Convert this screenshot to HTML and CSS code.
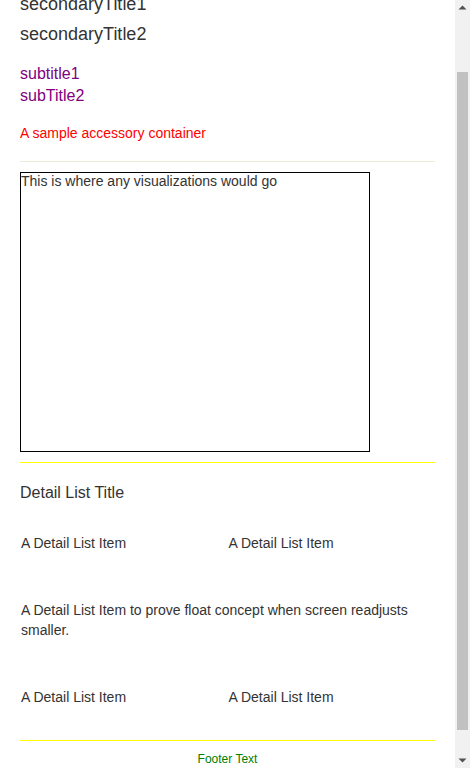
FILE: index.html
```html
<!DOCTYPE html>
<html lang="en">
<head>
<meta charset="utf-8">
<title>Sample Layout</title>
<link rel="stylesheet" href="styles.css">
</head>
<body>
<div class="window">
  <div class="viewport" id="viewport">
    <div class="page">
      <header class="titles">
        <h2 class="secondary-title">secondaryTitle1</h2>
        <h2 class="secondary-title">secondaryTitle2</h2>
      </header>
      <div class="subtitles">
        <h3 class="subtitle">subtitle1</h3>
        <h3 class="subtitle">subTitle2</h3>
      </div>
      <div class="accessory">A sample accessory container</div>
      <div class="rule rule-pale"></div>
      <div class="visual">This is where any visualizations would go</div>
      <div class="rule rule-yellow rule-after-visual"></div>
      <h4 class="detail-title">Detail List Title</h4>
      <ul class="detail-list">
        <li class="detail-item">A Detail List Item</li>
        <li class="detail-item">A Detail List Item</li>
        <li class="detail-item detail-item-wide">A Detail List Item to prove float concept when screen readjusts smaller.</li>
        <li class="detail-item">A Detail List Item</li>
        <li class="detail-item">A Detail List Item</li>
      </ul>
      <div class="rule rule-yellow rule-before-footer"></div>
      <footer class="footer">Footer Text</footer>
    </div>
  </div>
  <div class="scrollbar" aria-hidden="true">
    <div class="sb-button">
      <svg width="15" height="15" viewBox="0 0 15 15"><polygon points="3.5,9.5 7.5,5.5 11.5,9.5" fill="#505050"/></svg>
    </div>
    <div class="sb-track">
      <div class="sb-thumb"></div>
    </div>
    <div class="sb-button">
      <svg width="15" height="15" viewBox="0 0 15 15"><polygon points="3.5,5.5 7.5,9.5 11.5,5.5" fill="#505050"/></svg>
    </div>
  </div>
</div>
<script src="app.js"></script>
</body>
</html>
```

FILE: styles.css
```css
html, body {
  margin: 0;
  padding: 0;
  height: 100%;
  overflow: hidden;
  background: #fff;
}

body {
  font-family: "Liberation Sans", Arial, sans-serif;
  color: #333;
}

.window {
  display: flex;
  height: 100vh;
}

.viewport {
  flex: 1 1 auto;
  min-width: 0;
  height: 100vh;
  overflow: hidden;
}

.page {
  padding: 56px 20px 32px;
  display: flex;
  flex-direction: column;
}

.titles {
  display: flex;
  flex-direction: column;
}

.secondary-title {
  margin: 0;
  font-size: 18px;
  line-height: 30px;
  font-weight: normal;
  color: #333;
}

.subtitles {
  margin-top: 14px;
  display: flex;
  flex-direction: column;
}

.subtitle {
  margin: 0;
  font-size: 16px;
  line-height: 22px;
  font-weight: normal;
  color: #800080;
}

.accessory {
  margin-top: 16px;
  font-size: 14px;
  line-height: 20px;
  color: #ff0000;
}

.rule {
  height: 1px;
}

.rule-pale {
  margin-top: 18px;
  background: #ececd8;
}

.rule-yellow {
  background: #ffff00;
}

.visual {
  margin-top: 10px;
  width: 350px;
  height: 280px;
  box-sizing: border-box;
  border: 1px solid #000;
  font-size: 14px;
  line-height: normal;
}

.rule-after-visual {
  margin-top: 10px;
}

.detail-title {
  margin: 21px 0 0;
  font-size: 16px;
  line-height: 18px;
  font-weight: normal;
}

.detail-list {
  list-style: none;
  margin: 8px 0 0;
  padding: 0;
  display: flex;
  flex-wrap: wrap;
}

.detail-item {
  flex: 0 0 50%;
  box-sizing: border-box;
  padding: 23px 1px 24px;
  font-size: 14px;
  line-height: 20px;
}

.detail-item-wide {
  flex-basis: 100%;
}

.rule-before-footer {
  margin-top: 9px;
}

.footer {
  margin-top: 11px;
  font-size: 12px;
  line-height: 14px;
  text-align: center;
  color: #008000;
}

.scrollbar {
  flex: 0 0 15px;
  width: 15px;
  height: 100vh;
  background: #f1f1f1;
  display: flex;
  flex-direction: column;
}

.sb-button {
  flex: 0 0 15px;
  height: 15px;
}

.sb-button svg {
  display: block;
}

.sb-track {
  flex: 1 1 auto;
  padding: 57px 2px 23px;
  display: flex;
  flex-direction: column;
}

.sb-thumb {
  flex: 1 1 auto;
  background: #c1c1c1;
}
```

FILE: app.js
```js
document.getElementById('viewport').scrollTop = 67;
```
